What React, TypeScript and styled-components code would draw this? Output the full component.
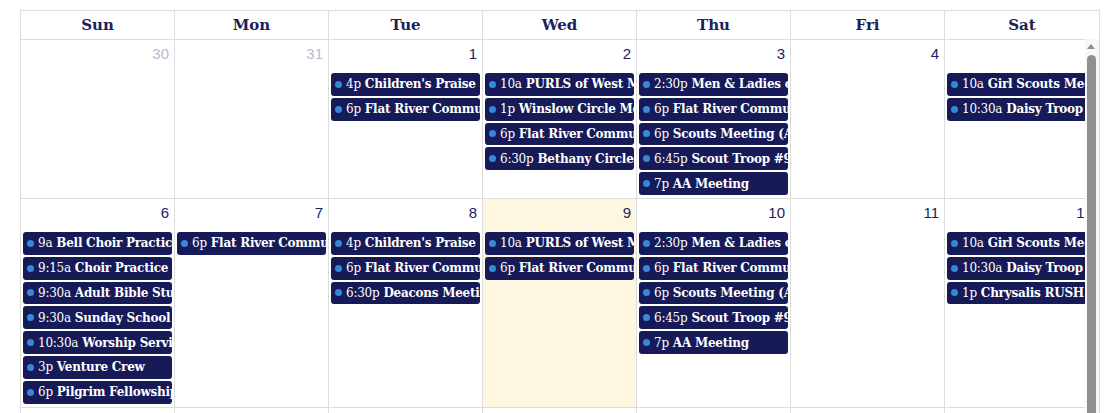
import React from "react";
import styled, { createGlobalStyle } from "styled-components";

const Global = createGlobalStyle`
  html, body { margin: 0; padding: 0; background: #fff; overflow: hidden; }
  * { box-sizing: border-box; }
`;

const NAVY = "#161a57";
const BORDER = "#dddddd";
const FONT = `"DejaVu Serif", "Liberation Serif", serif`;

const Page = styled.div`
  padding: 10px 14px 0 20px;
  font-family: ${FONT};
`;

const Calendar = styled.div`
  width: 1080px;
  border-top: 1px solid ${BORDER};
  border-right: 1px solid ${BORDER};
`;

const HeaderRow = styled.div`
  display: grid;
  grid-template-columns: repeat(6, 154px) 1fr;
`;

const HeaderCell = styled.div`
  height: 28px;
  padding-bottom: 1px;
  border-left: 1px solid ${BORDER};
  display: flex;
  align-items: center;
  justify-content: center;
  font-weight: 700;
  font-size: 15px;
  color: #1b1f5a;
`;

const Body = styled.div`
  display: flex;
  height: 380px;
`;

const Clip = styled.div`
  flex: 1;
  overflow: hidden;
`;

const Week = styled.div`
  display: grid;
  grid-template-columns: repeat(7, 154px);
  width: 1078px;
  border-top: 1px solid ${BORDER};
`;

const DayCell = styled.div<{ $today?: boolean }>`
  border-left: 1px solid ${BORDER};
  background: ${(p) => (p.$today ? "#fdf7e1" : "transparent")};
  padding: 0 2px 1px 2px;
  min-height: 157px;
`;

const DayNum = styled.div<{ $other?: boolean }>`
  text-align: right;
  padding: 5px 3px 0 0;
  height: 33px;
  font-family: "Liberation Sans", Arial, sans-serif;
  font-size: 15px;
  color: ${(p) => (p.$other ? "#b9bbcf" : "#1c2262")};
`;

const Event = styled.div`
  display: flex;
  align-items: center;
  height: 22.8px;
  margin-bottom: 2px;
  background: ${NAVY};
  border-radius: 3px;
  color: #fff;
  font-size: 12px;
  white-space: nowrap;
  overflow: hidden;
  padding-left: 4px;
  letter-spacing: -0.25px;
`;

const Dot = styled.span`
  flex: none;
  width: 7px;
  height: 7px;
  border-radius: 50%;
  background: #3788d8;
  margin-right: 4px;
`;

const Time = styled.span`
  font-weight: 400;
  margin-right: 4px;
`;

const Title = styled.span`
  font-weight: 700;
`;

const Scrollbar = styled.div`
  width: 14px;
  background: #f8f8f8;
  display: flex;
  flex-direction: column;
  align-items: center;
  padding-top: 5px;
`;

const Arrow = styled.div`
  width: 0;
  height: 0;
  border-left: 4px solid transparent;
  border-right: 4px solid transparent;
  border-bottom: 5px solid #8f8f8f;
  margin-left: -2px;
`;

const Thumb = styled.div`
  margin-top: 6px;
  width: 9px;
  flex: 1;
  background: #8f8f8f;
  border-radius: 5px 5px 0 0;
  margin-left: -2px;
`;

type Ev = [string, string];
type Day = { n: number; other?: boolean; today?: boolean; events: Ev[] };

const weeks: Day[][] = [
  [
    { n: 30, other: true, events: [] },
    { n: 31, other: true, events: [] },
    {
      n: 1,
      events: [
        ["4p", "Children's Praise Choir"],
        ["6p", "Flat River Community"],
      ],
    },
    {
      n: 2,
      events: [
        ["10a", "PURLS of West Mecklenburg"],
        ["1p", "Winslow Circle Meeting"],
        ["6p", "Flat River Community"],
        ["6:30p", "Bethany Circle Meeting"],
      ],
    },
    {
      n: 3,
      events: [
        ["2:30p", "Men & Ladies of Faith"],
        ["6p", "Flat River Community"],
        ["6p", "Scouts Meeting (All)"],
        ["6:45p", "Scout Troop #9"],
        ["7p", "AA Meeting"],
      ],
    },
    { n: 4, events: [] },
    {
      n: 5,
      events: [
        ["10a", "Girl Scouts Meeting"],
        ["10:30a", "Daisy Troop Meeting"],
      ],
    },
  ],
  [
    {
      n: 6,
      events: [
        ["9a", "Bell Choir Practice"],
        ["9:15a", "Choir Practice"],
        ["9:30a", "Adult Bible Study"],
        ["9:30a", "Sunday School"],
        ["10:30a", "Worship Service"],
        ["3p", "Venture Crew"],
        ["6p", "Pilgrim Fellowship"],
      ],
    },
    { n: 7, events: [["6p", "Flat River Community"]] },
    {
      n: 8,
      events: [
        ["4p", "Children's Praise Choir"],
        ["6p", "Flat River Community"],
        ["6:30p", "Deacons Meeting"],
      ],
    },
    {
      n: 9,
      today: true,
      events: [
        ["10a", "PURLS of West Mecklenburg"],
        ["6p", "Flat River Community"],
      ],
    },
    {
      n: 10,
      events: [
        ["2:30p", "Men & Ladies of Faith"],
        ["6p", "Flat River Community"],
        ["6p", "Scouts Meeting (All)"],
        ["6:45p", "Scout Troop #9"],
        ["7p", "AA Meeting"],
      ],
    },
    { n: 11, events: [] },
    {
      n: 12,
      events: [
        ["10a", "Girl Scouts Meeting"],
        ["10:30a", "Daisy Troop Meeting"],
        ["1p", "Chrysalis RUSH"],
      ],
    },
  ],
  [
    { n: 13, events: [] },
    { n: 14, events: [] },
    { n: 15, events: [] },
    { n: 16, events: [] },
    { n: 17, events: [] },
    { n: 18, events: [] },
    { n: 19, events: [] },
  ],
];

const dayNames = ["Sun", "Mon", "Tue", "Wed", "Thu", "Fri", "Sat"];

export default function App() {
  return (
    <Page>
      <Global />
      <Calendar>
        <HeaderRow>
          {dayNames.map((d) => (
            <HeaderCell key={d}>{d}</HeaderCell>
          ))}
        </HeaderRow>
        <Body>
          <Clip>
            {weeks.map((w, i) => (
              <Week key={i}>
                {w.map((d) => (
                  <DayCell key={d.n} $today={d.today}>
                    <DayNum $other={d.other}>{d.n}</DayNum>
                    {d.events.map(([t, title], j) => (
                      <Event key={j}>
                        <Dot />
                        <Time>{t}</Time>
                        <Title>{title}</Title>
                      </Event>
                    ))}
                  </DayCell>
                ))}
              </Week>
            ))}
          </Clip>
          <Scrollbar>
            <Arrow />
            <Thumb />
          </Scrollbar>
        </Body>
      </Calendar>
    </Page>
  );
}
